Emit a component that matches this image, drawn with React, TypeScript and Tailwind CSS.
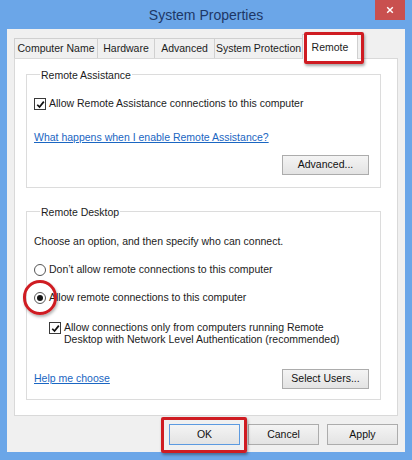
import React from 'react';

function CheckBox() {
  return (
    <span className="flex h-[12px] w-[12px] shrink-0 items-center justify-center border border-[#3a3a3a] bg-white">
      <svg viewBox="0 0 10 10" className="h-[9px] w-[9px]">
        <path d="M1.4 5.3 L3.9 7.8 L8.7 1.8" fill="none" stroke="#111" strokeWidth="1.9" />
      </svg>
    </span>
  );
}

function Radio({ checked }: { checked?: boolean }) {
  return (
    <span className="flex h-[12px] w-[12px] shrink-0 items-center justify-center rounded-full border border-[#555] bg-white">
      {checked && <span className="h-[6px] w-[6px] rounded-full bg-[#151515]" />}
    </span>
  );
}

function Button({ label, primary }: { label: string; primary?: boolean }) {
  return (
    <button
      className={
        primary
          ? 'flex h-[21px] w-[71px] items-center justify-center border border-[#5c9ae0] bg-gradient-to-b from-[#f4f4f4] to-[#e3e3e3] text-[#111]'
          : 'flex h-[21px] w-[71px] items-center justify-center border border-[#acacac] bg-gradient-to-b from-[#f4f4f4] to-[#e3e3e3] text-[#111]'
      }>
      {label}
    </button>
  );
}

function Legend({ title }: { title: string }) {
  return (
    <div className="-mt-[7px] ml-[6px] h-[14px] w-fit bg-white px-[1px] leading-[14px]">
      {title}
    </div>
  );
}

const tabs = [
  { title: 'Computer Name', width: 'w-[84px]' },
  { title: 'Hardware', width: 'w-[58px]' },
  { title: 'Advanced', width: 'w-[61px]' },
  { title: 'System Protection', width: 'w-[89px]' }];

export default function App() {
  return (
    <div className="flex h-[460px] w-[412px] flex-col bg-[#6ba6e8] font-['Liberation_Sans',Arial,sans-serif]">
      {/* title bar */}
      <div className="grid h-[29px] grid-cols-[1fr_auto_1fr] items-start">
        <div />
        <div className="pt-[5px] text-[14px] leading-[20px] text-[#1d3766]">System Properties</div>
        <div className="flex justify-end pr-[7px]">
          <div className="flex h-[20px] w-[30px] items-center justify-center bg-[#c9504f]">
            <svg viewBox="0 0 10 10" className="h-[8px] w-[8px]">
              <path d="M1.5 1.5 L8.5 8.5 M8.5 1.5 L1.5 8.5" stroke="#fff" strokeWidth="1.8" />
            </svg>
          </div>
        </div>
      </div>

      {/* dialog body */}
      <div className="mx-[7px] mb-[8px] flex flex-1 flex-col bg-[#f0f0f0] pl-[7px] pr-[7px] text-[10.5px] text-[#1c1c1c]">
        {/* tabs */}
        <div className="relative z-10 mt-[5px] flex h-[24px] items-end pl-[1px]">
          {tabs.map((tab, index) =>
          <div
            key={index}
            className={`-ml-px flex h-[20px] items-center justify-center border border-b-0 border-[#d0d0d0] bg-[#f0f0f0] ${tab.width}`}>
              {tab.title}
            </div>
          )}
          <div className="relative -mb-px -ml-px flex h-[25px] w-[56px] items-start justify-center border border-b-0 border-[#d0d0d0] bg-white pt-[5px]">
            Remote
            <div className="absolute -top-[3px] left-[1px] h-[32px] w-[60px] rounded-[2px] border-[3px] border-[#cf1c22] shadow-[1px_2px_3px_rgba(0,0,0,0.35)]" />
          </div>
        </div>

        {/* tab panel */}
        <div className="flex h-[358px] flex-col border border-[#d9d9d9] bg-white pl-[11px] pt-[15px]">
          {/* Remote Assistance */}
          <div className="flex h-[114px] w-[355px] flex-col border border-[#dcdcdc] pl-[7px] pr-[11px]">
            <Legend title="Remote Assistance" />
            <div className="mt-[15px] flex h-[14px] items-center gap-[3px]">
              <CheckBox />
              <span>Allow Remote Assistance connections to this computer</span>
            </div>
            <div className="mt-[19px] h-[14px] leading-[14px] text-[#1a66c2] underline">
              What happens when I enable Remote Assistance?
            </div>
            <div className="mt-[11px] flex justify-end">
              <button className="flex h-[20px] w-[87px] items-center justify-center border border-[#acacac] bg-gradient-to-b from-[#f4f4f4] to-[#e3e3e3] text-[#111]">
                Advanced...
              </button>
            </div>
          </div>

          {/* Remote Desktop */}
          <div className="mt-[23px] flex h-[189px] w-[355px] flex-col border border-[#dcdcdc] pl-[7px] pr-[11px]">
            <Legend title="Remote Desktop" />
            <div className="mt-[15px] h-[14px] leading-[14px]">
              Choose an option, and then specify who can connect.
            </div>
            <div className="mt-[15px] flex h-[14px] items-center gap-[3px]">
              <Radio />
              <span>Don’t allow remote connections to this computer</span>
            </div>
            <div className="mt-[14px] flex h-[14px] items-center gap-[3px]">
              <div className="relative">
                <Radio checked />
                <div className="absolute -left-[11px] -top-[12px] h-[35px] w-[34px] rounded-full border-[3px] border-[#cf1c22] shadow-[1px_2px_3px_rgba(0,0,0,0.3)]" />
              </div>
              <span>Allow remote connections to this computer</span>
            </div>
            <div className="mt-[16px] flex items-start gap-[3px] pl-[15px]">
              <div className="pt-[1px]">
                <CheckBox />
              </div>
              <span className="leading-[12px]">
                Allow connections only from computers running Remote
                <br />
                Desktop with Network Level Authentication (recommended)
              </span>
            </div>
            <div className="mt-[24px] flex h-[20px] items-center justify-between">
              <span className="text-[#1a66c2] underline">Help me choose</span>
              <button className="flex h-[20px] w-[87px] items-center justify-center border border-[#acacac] bg-gradient-to-b from-[#f4f4f4] to-[#e3e3e3] text-[#111]">
                Select Users...
              </button>
            </div>
          </div>
        </div>

        {/* dialog buttons */}
        <div className="mt-[8px] flex justify-end gap-[8px]">
          <div className="relative">
            <Button label="OK" primary />
            <div className="absolute -left-[8px] -top-[7px] h-[36px] w-[86px] rounded-[2px] border-[3px] border-[#cf1c22] shadow-[1px_2px_3px_rgba(0,0,0,0.35)]" />
          </div>
          <Button label="Cancel" />
          <Button label="Apply" />
        </div>
      </div>
    </div>
  );
}
